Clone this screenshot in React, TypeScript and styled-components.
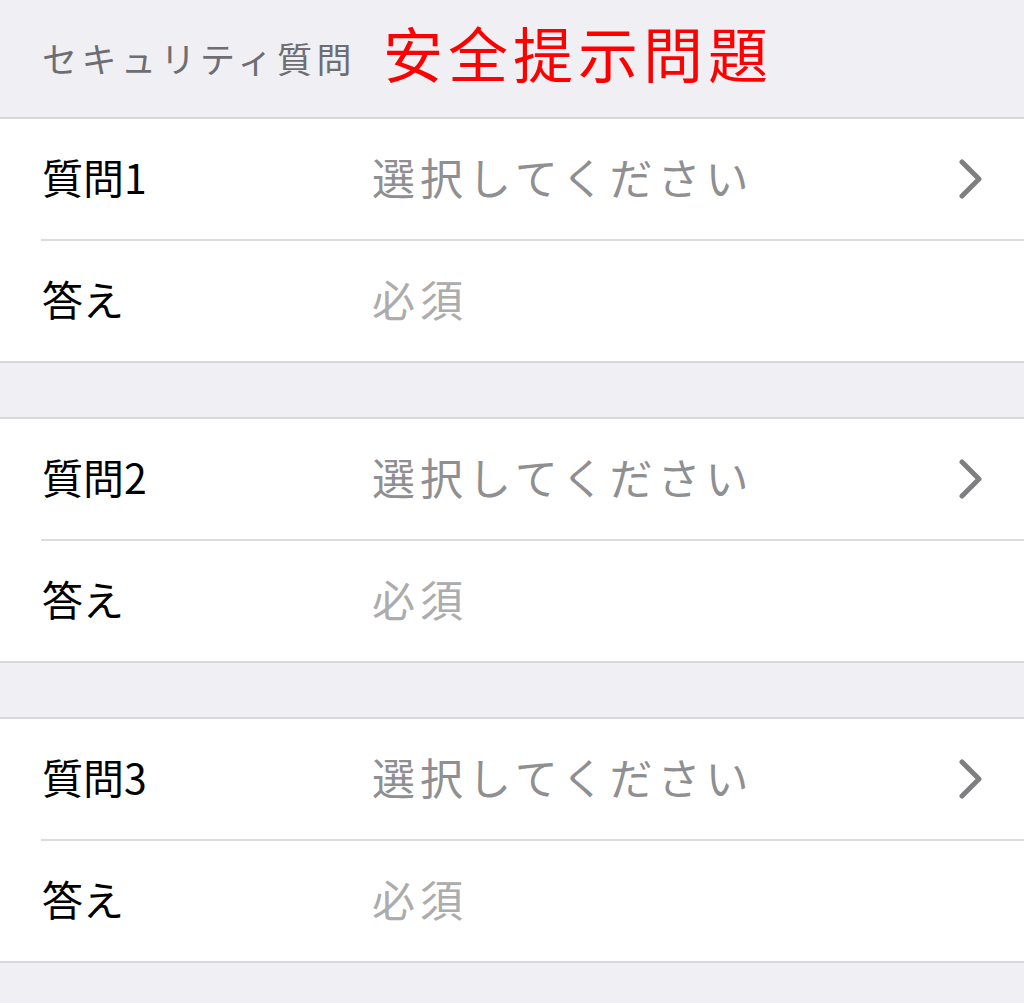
import React from "react";
import styled, { createGlobalStyle } from "styled-components";

const GlobalStyle = createGlobalStyle`
  html, body {
    margin: 0;
    padding: 0;
    background: #efeff4;
  }
  body {
    font-family: "Noto Sans CJK JP", "Noto Sans", sans-serif;
  }
`;

const Page = styled.div`
  width: 1024px;
  min-height: 1003px;
  background: #efeff4;
  display: flex;
  flex-direction: column;
`;

const Header = styled.div`
  height: 117px;
  display: flex;
  align-items: center;
  padding-left: 42px;
  box-sizing: border-box;
`;

const HeaderText = styled.span`
  font-family: "Noto Sans CJK JP", sans-serif;
  font-size: 35px;
  letter-spacing: 4.5px;
  color: #6d6d72;
  line-height: 1;
  margin-bottom: 2px;
`;

const RedTitle = styled.span`
  font-family: "Noto Sans CJK SC", sans-serif;
  font-size: 60px;
  letter-spacing: 5px;
  color: #ff0000;
  line-height: 1;
  margin-left: 27px;
  margin-bottom: 14px;
`;

const Section = styled.div`
  background: #ffffff;
  border-top: 2px solid #d8d8dc;
  border-bottom: 2px solid #d8d8dc;
`;

const Gap = styled.div`
  height: 54px;
`;

const Row = styled.div<{ $divider?: boolean }>`
  height: 120px;
  display: flex;
  align-items: center;
  padding-left: 42px;
  padding-right: 40px;
  padding-bottom: 6px;
  box-sizing: border-box;
  position: relative;
  ${(p) =>
    p.$divider
      ? `
    &::after {
      content: "";
      position: absolute;
      left: 41px;
      right: 0;
      bottom: -2px;
      height: 2px;
      background: #dcdcdf;
    }
    margin-bottom: 2px;
  `
      : ""}
`;

const Label = styled.div`
  width: 330px;
  flex-shrink: 0;
  font-size: 41px;
  color: #000000;
  line-height: 1;
`;

const Value = styled.div<{ $light?: boolean }>`
  flex: 1;
  font-size: 43px;
  letter-spacing: 5px;
  color: ${(p) => (p.$light ? "#acacac" : "#8f8f92")};
  line-height: 1;
`;

const ChevronBox = styled.span`
  display: flex;
  margin-top: 6px;
`;

const Chevron = () => (
  <ChevronBox>
    <svg width="26" height="40" viewBox="0 0 26 40" fill="none">
      <path
        d="M4 3 L21 20 L4 37"
        stroke="#7f7f82"
        strokeWidth="5"
        strokeLinecap="round"
        strokeLinejoin="round"
      />
    </svg>
  </ChevronBox>
);

const QuestionBlock = ({ n }: { n: number }) => (
  <Section>
    <Row $divider>
      <Label>質問{n}</Label>
      <Value>選択してください</Value>
      <Chevron />
    </Row>
    <Row>
      <Label>答え</Label>
      <Value $light>必須</Value>
    </Row>
  </Section>
);

export default function App() {
  return (
    <>
      <GlobalStyle />
      <Page>
        <Header>
          <HeaderText>セキュリティ質問</HeaderText>
          <RedTitle>安全提示問題</RedTitle>
        </Header>
        <QuestionBlock n={1} />
        <Gap />
        <QuestionBlock n={2} />
        <Gap />
        <QuestionBlock n={3} />
      </Page>
    </>
  );
}
